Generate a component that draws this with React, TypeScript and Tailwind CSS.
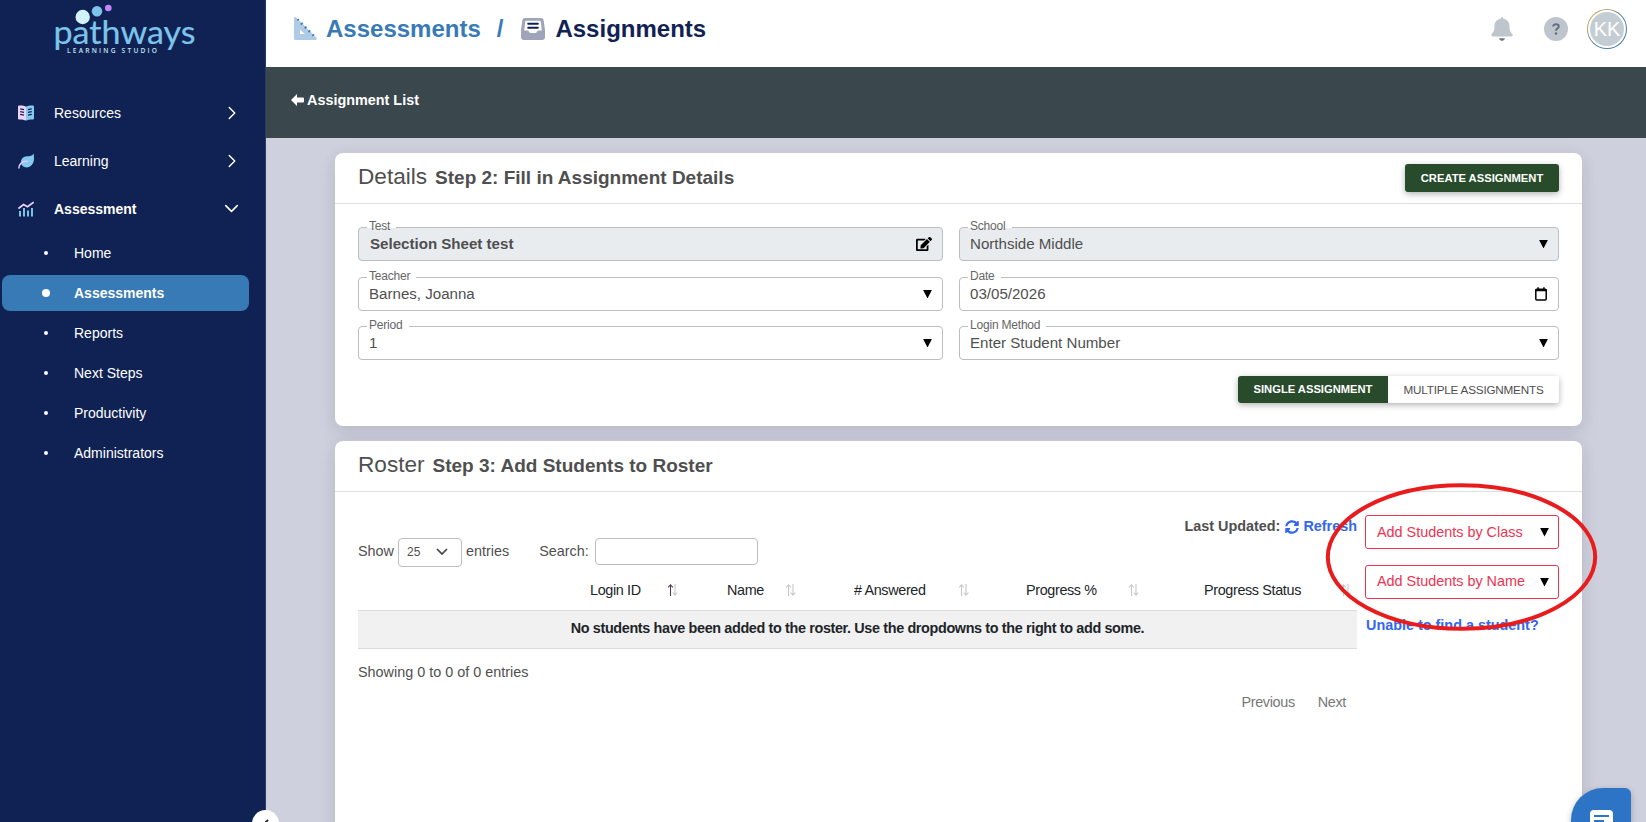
import { type ReactNode } from "react"
import { FaEdit, FaSyncAlt } from "react-icons/fa";
import { ChevronRight, ChevronDown } from "lucide-react";

const BookIcon = () => (
    <svg width="16" height="16" viewBox="0 0 16 16">
        <path d="M8 1.6C6 .5 3.500 .2 1 .5Q0 .6 0 1.500V13.500Q0 14.400 1 14.400C3.500 14.300 6 14.600 8 15.600Z" fill="#ecd3fb" />
        <path d="M8 1.600C10 .5 12.500 .2 15 .5Q16 .6 16 1.500V13.500Q16 14.400 15 14.400C12.500 14.300 10 14.600 8 15.600Z" fill="#84c9ef" />
        <path d="M2.200 3.800L6 4.600M2.200 6.600L6 7.400M2.200 9.400L6 10.200M13.800 3.800L10 4.600M13.800 6.600L10 7.400M13.800 9.400L10 10.200" stroke="#102254" strokeWidth="1.300" />
    </svg>
);

const LeafIcon = () => (
    <svg width="16" height="16" viewBox="0 0 16 16">
        <path d="M15.700 .5C14.500 2.800 12 3.200 9 3.300C5.500 3.400 3 6 3 9C3 12.500 5.500 14.400 8.500 14.400C13 14.400 16 10.500 16 5.500C16 3.500 15.900 1.500 15.700 .5Z" fill="#84c9ef" />
        <path d="M.8 15.500C1 11.500 4 8.200 9.800 8" fill="none" stroke="#ecc9fb" strokeWidth="1.500" />
    </svg>
);

const ChartIcon = () => (
    <svg width="16" height="16" viewBox="0 0 16 16">
        <path d="M.5 7.500L5.500 3.500L9.500 5.800L15.700 1.200" fill="none" stroke="#ecd3fb" strokeWidth="1.700" />
        <path d="M2 10V15.500M6 7V15.500M10 9.500V15.500M14 7V15.500" stroke="#84c9ef" strokeWidth="1.900" />
    </svg>
);

const Caret = () => (
    <svg className="shrink-0" width="9" height="8.5" viewBox="0 0 9 8.5">
        <path d="M.1 0H8.900L4.500 8.500Z" fill="#000" />
    </svg>
);

const CalendarIcon = () => (
    <svg className="mr-px" width="12" height="14" viewBox="0 0 12 14">
        <rect x=".8" y="2.300" width="10.400" height="10.700" rx="1" fill="none" stroke="#000" strokeWidth="1.500" />
        <path d="M.5 2H11.500V4.300H.5ZM2.300 .3H3.800V2H2.300ZM8.200 .3H9.700V2H8.200Z" fill="#000" />
    </svg>
);

const SortIcon = ({ active = false }: { active?: boolean }) => (
    <svg width="11" height="12" viewBox="0 0 11 12" fill="none">
        <path d="M3.500 12V1M1 3.500L3.500 .8L6 3.500" stroke={active ? "#4a3f52" : "#c8c8c8"} strokeWidth="1.100" />
        <path d="M8 0V11M5.700 8.500L8 11.200L10.400 8.500" stroke="#c8c8c8" strokeWidth="1.100" />
    </svg>
);

const Logo = () => (
    <svg className="ml-[50px]" width="156" height="58" viewBox="50 0 156 58">
        <circle cx="82.700" cy="17" r="7.200" fill="#d3f3fb" />
        <circle cx="97" cy="11.300" r="5.200" fill="#7cc4ea" />
        <circle cx="108.300" cy="8" r="3.300" fill="#c287fb" />
        <text x="53.500" y="43.500" fontFamily="Lato, sans-serif" fontSize="32" textLength="142" lengthAdjust="spacingAndGlyphs" fill="#7cc4ea" stroke="#7cc4ea" strokeWidth=".2">pathways</text>
        <text x="67" y="52.800" fontFamily="Open Sans, sans-serif" fontSize="6.600" fontWeight="600" textLength="90" fill="#c3e4f3">LEARNING STUDIO</text>
    </svg>
);

const menu = [
    { name: "Resources", icon: <BookIcon />, open: false },
    { name: "Learning", icon: <LeafIcon />, open: false },
    { name: "Assessment", icon: <ChartIcon />, open: true },
];

const subMenu = ["Home", "Assessments", "Reports", "Next Steps", "Productivity", "Administrators"];

const Sidebar = () => (
    <aside className="relative w-[266px] shrink-0 bg-[#102254] border-r border-[#2b3b68] text-white text-sm">
        <Logo />
        <nav className="pt-[31px]">
            {menu.map(item => (
                <div key={item.name} className="h-12 flex items-center pl-[18px] pr-[22px]">
                    {item.icon}
                    <span className={item.open ? "ml-5 flex-1 font-bold" : "ml-5 flex-1"}>{item.name}</span>
                    {item.open
                        ? <ChevronDown className="mb-px" size={23} strokeWidth={1.6} />
                        : <ChevronRight className="mb-px" size={22} strokeWidth={1.6} />}
                </div>
            ))}
            <ul className="pt-0.5 flex flex-col gap-1">
                {subMenu.map(name => {
                    const active = name === "Assessments";
                    return (
                        <li
                            key={name}
                            className={active
                                ? "ml-0.5 mr-4 h-9 flex items-center rounded-lg bg-[#387ab5] pl-10 font-bold"
                                : "mx-0.5 h-9 flex items-center pl-10"}
                        >
                            <span className="w-2 flex justify-center">
                                <span className={active ? "size-2 rounded-full bg-white" : "size-1 rounded-full bg-white"} />
                            </span>
                            <span className="ml-6">{name}</span>
                        </li>
                    );
                })}
            </ul>
        </nav>
        <button className="absolute left-[252px] top-[810px] z-10 size-[27px] rounded-full bg-white flex items-center justify-center">
            <svg width="6" height="10" viewBox="0 0 6 10"><path d="M5 1L1 5L5 9" fill="none" stroke="#222" strokeWidth="1.800" /></svg>
        </button>
    </aside>
);

const Header = () => (
    <header className="h-[67px] shrink-0 bg-white flex items-start justify-between pl-7 pr-[19px]">
        <div className="mt-[11px] h-[36px] flex items-center text-2xl font-bold">
            <svg className="mb-0.5" width="23" height="23" viewBox="0 0 23 23">
                <path d="M0 1.500C0 0 1.500 -.3 2.500 .7L22.300 20.500C23.300 21.500 22.800 23 21.300 23H1.500Q0 23 0 21.500ZM6 12.500V17H10.800Z" fill="#b0cbe5" fillRule="evenodd" />
                <path d="M4.800 2L3.300 3.500M8.600 5.800L6.800 7.600M12.400 9.600L10.600 11.400M16.200 13.400L14.400 15.200M20 17.200L18.200 19" stroke="#387ab5" strokeWidth="1.600" />
            </svg>
            <span className="ml-[9px] text-[#387ab5]">Assessments</span>
            <span className="ml-4 text-[#387ab5]">/</span>
            <svg className="ml-[18px]" width="24" height="22" viewBox="0 0 24 22">
                <path d="M4 0H20Q22.200 0 22.600 2L24 12V19Q24 22 21 22H3Q0 22 0 19V12L1.400 2Q1.800 0 4 0ZM5.300 2.800Q4.300 2.800 4.200 3.800L3.200 12.500H7L9 15H15L17 12.500H20.800L19.800 3.800Q19.700 2.800 18.700 2.800Z" fill="#9fa4ba" fillRule="evenodd" />
                <path d="M7.200 5.700H16.800M7.200 9.700H16.800" stroke="#102254" strokeWidth="2" strokeLinecap="round" />
            </svg>
            <span className="ml-2.5 text-[#102254]">Assignments</span>
        </div>
        <div className="mt-[9px] flex items-center">
            <svg width="22" height="24" viewBox="0 0 22 24">
                <path d="M11 0Q12.300 0 12.300 1.700C16.500 2.300 18.500 5.500 18.500 9C18.500 13.500 19.500 15 21.200 16.800C22.300 18 21.700 19.500 20.200 19.500H1.800C.3 19.500 -.3 18 .8 16.800C2.500 15 3.500 13.500 3.500 9C3.500 5.500 5.500 2.300 9.700 1.700Q9.700 0 11 0Z" fill="#bfc5cc" />
                <path d="M8 21.300H14Q13.500 24 11 24Q8.500 24 8 21.300Z" fill="#6b7785" />
            </svg>
            <span className="ml-[31px] size-6 rounded-full bg-[#bfc5cc] flex items-center justify-center">
                <svg width="8" height="12" viewBox="0 0 8 12">
                    <path d="M1.200 3.500C1.200 .4 6.800 .5 6.800 3.500C6.800 5.300 4 5.200 4 7.800" fill="none" stroke="#62707f" strokeWidth="2" />
                    <circle cx="4" cy="10.500" r="1.300" fill="#62707f" />
                </svg>
            </span>
            <span className="ml-[19px] size-10 rounded-full p-px bg-[linear-gradient(135deg,#f2b544,#4f86a8_60%,#2f6db5)]">
                <span className="size-full rounded-full border-2 border-white bg-[#c5cdd4] flex items-center justify-center text-xl text-white">KK</span>
            </span>
        </div>
    </header>
);

const Card = ({ title, step, action, children }: { title: string; step: string; action?: ReactNode; children: ReactNode }) => (
    <section className="rounded-lg bg-white shadow-[0_2px_15px_rgba(40,45,80,0.07),0_10px_20px_rgba(40,45,60,0.08)]">
        <div className="h-[51px] flex items-center justify-between border-b border-[#dfdfdf] pl-[23px] pr-[23px]">
            <h2 className="pb-0.5 flex items-baseline text-[#4f4f4f]">
                <span className="text-[22.6px]">{title}</span>
                <span className="ml-2 text-[19px] font-bold">{step}</span>
            </h2>
            {action}
        </div>
        {children}
    </section>
);

const Field = ({ label, value, disabled = false, bold = false, icon = <Caret /> }: { label: string; value: string; disabled?: boolean; bold?: boolean; icon?: ReactNode }) => (
    <div className={disabled
        ? "relative h-[34px] rounded border border-[#bdbdbd] bg-[#e9ecef] flex items-center justify-between pl-[10px] pr-[10px]"
        : "relative h-[34px] rounded border border-[#bdbdbd] bg-white flex items-center justify-between pl-[10px] pr-[10px]"}
    >
        <span className="absolute left-2 -top-px h-px bg-white pl-0.5 pr-1.5 text-xs leading-[-1px] tracking-[-0.2px] text-[#666]">
            <span className="block -mt-px leading-[1px]">{label}</span>
        </span>
        <span className={bold ? "pl-px text-[15.1px] font-bold text-[#4f4f4f]" : "text-[15.1px] text-[#4f4f4f]"}>{value}</span>
        {icon}
    </div>
);

const Details = () => (
    <Card
        title="Details"
        step="Step 2: Fill in Assignment Details"
        action={
            <button className="h-7 w-[154px] rounded-[3px] bg-[#284b2b] text-[11.2px] font-bold text-white shadow-[0_2px_6px_rgba(0,0,0,0.3)]">CREATE ASSIGNMENT</button>
        }
    >
        <div className="h-[222px] pt-[23px] pl-[23px] pr-[23px]">
            <div className="grid grid-cols-[585px_600px] gap-x-4">
                <Field label="Test" value="Selection Sheet test" disabled bold icon={<FaEdit size={16} color="#000" />} />
                <Field label="School" value="Northside Middle" disabled />
            </div>
            <div className="mt-4 grid grid-cols-[585px_600px] gap-x-4">
                <Field label="Teacher" value="Barnes, Joanna" />
                <Field label="Date" value="03/05/2026" icon={<CalendarIcon />} />
            </div>
            <div className="mt-[15px] grid grid-cols-[585px_600px] gap-x-4">
                <Field label="Period" value="1" />
                <Field label="Login Method" value="Enter Student Number" />
            </div>
            <div className="mt-4 flex justify-end text-[11.2px]">
                <div className="h-[27px] flex rounded-[3px] shadow-[0_2px_6px_rgba(0,0,0,0.3)]">
                    <button className="w-[150px] rounded-l-[3px] bg-[#284b2b] font-bold text-white">SINGLE ASSIGNMENT</button>
                    <button className="w-[171px] rounded-r-[3px] bg-white text-[11.7px] tracking-[-0.2px] text-[#4f4f4f]">MULTIPLE ASSIGNMENTS</button>
                </div>
            </div>
        </div>
    </Card>
);

const columns = [
    { name: "Login ID", size: "w-[88px]" },
    { name: "Name", size: "w-[69px] ml-[49px]" },
    { name: "# Answered", size: "w-[115px] ml-[58px]" },
    { name: "Progress %", size: "w-[113px] ml-[57px]" },
    { name: "Progress Status", size: "w-[147px] ml-[65px]" },
];

const Roster = () => (
    <Card title="Roster" step="Step 3: Add Students to Roster">
        <div className="h-[400px] pt-[23px] pl-[23px] pr-[23px] flex text-[14.4px] text-[#4f4f4f]">
            <div className="w-[999px]">
                <div className="h-[22px] pt-0.5 flex items-center justify-end font-bold">
                    Last Updated:
                    <FaSyncAlt className="ml-[5px]" size={14} color="#3366ee" />
                    <a className="ml-1 text-[#3366ee]">Refresh</a>
                </div>
                <div className="mt-px h-[29px] flex items-start">
                    <span className="leading-[27px]">Show</span>
                    <div className="ml-1 w-16 h-[29px] rounded border border-[#bdbdbd] flex items-center justify-between pb-0.5 pl-2 pr-[13px] text-xs">
                        25
                        <svg width="12" height="7" viewBox="0 0 12 7"><path d="M1 1L6 6L11 1" fill="none" stroke="#444" strokeWidth="1.700" /></svg>
                    </div>
                    <span className="ml-1 leading-[27px]">entries</span>
                    <span className="ml-[30px] leading-[27px]">Search:</span>
                    <input className="ml-1.5 w-[163px] h-[27px] rounded border border-[#bdbdbd]" type="text" />
                </div>
                <div className="h-[43px] pl-[232px] pt-[4px] flex items-center tracking-[-0.36px] text-[#212529]">
                    {columns.map((col, i) => (
                        <div key={col.name} className={`${col.size} flex items-center justify-between whitespace-nowrap`}>
                            {col.name}
                            <SortIcon active={i === 0} />
                        </div>
                    ))}
                </div>
                <div className="h-[39px] pb-px border-y border-[#dcdcdc] bg-[#f1f1f1] flex items-center justify-center tracking-[-0.36px] font-bold text-[#212529]">
                    No students have been added to the roster. Use the dropdowns to the right to add some.
                </div>
                <p className="mt-[13px] leading-5">Showing 0 to 0 of 0 entries</p>
                <div className="mt-2.5 flex justify-end gap-[23px] pr-[11px] tracking-[-0.34px] leading-5 text-[#777]">
                    <span>Previous</span>
                    <span>Next</span>
                </div>
            </div>
            <div className="relative ml-2 w-[194px]">
                <button className="h-[34px] w-full rounded-[3px] border border-[#ee3350] flex items-center justify-between pt-px pl-[11px] pr-[9px] text-[#ee3350]">
                    Add Students by Class
                    <Caret />
                </button>
                <button className="mt-4 h-[34px] w-full rounded-[3px] border border-[#ee3350] flex items-center justify-between pt-px pl-[11px] pr-[9px] text-[#ee3350]">
                    <span className="pb-px">Add Students by Name</span>
                    <Caret />
                </button>
                <a className="mt-4 block leading-5 pl-px font-bold text-[#3366ee] whitespace-nowrap">Unable to find a student?</a>
                <svg className="absolute -left-10 -top-8" width="273" height="150" viewBox="0 0 273 150">
                    <ellipse cx="136.500" cy="74" rx="133.700" ry="71.800" fill="none" stroke="#e81c1c" strokeWidth="4" />
                </svg>
            </div>
        </div>
    </Card>
);

const App = () => (
    <div className="relative flex h-[822px] w-[1646px] overflow-hidden bg-[#cfd0dd] font-['Liberation_Sans',Arial,sans-serif]">
        <Sidebar />
        <div className="flex-1 flex flex-col">
            <Header />
            <div className="h-[71px] shrink-0 bg-[#3a484e] pl-[25px] pt-[23px] flex items-start text-[14.4px] leading-5 font-bold text-white">
                <svg className="mt-1" width="13" height="12" viewBox="0 0 13 12"><path d="M0 6L6 0V3.500H12Q13 3.500 13 4.500V7.500Q13 8.500 12 8.500H6V12Z" fill="#fff" /></svg>
                <span className="ml-[3px]">Assignment List</span>
            </div>
            <main className="mt-[15px] ml-[69px] w-[1247px] flex flex-col gap-[15px]">
                <Details />
                <Roster />
            </main>
        </div>
        <button className="absolute left-[1571px] top-[788px] size-[60px] rounded-[6px] rounded-tl-[32px] bg-[#2d74c7] shadow-[0_2px_6px_rgba(0,0,0,0.25)]">
            <svg className="absolute left-[19px] top-[22px]" width="23" height="22" viewBox="0 0 23 22">
                <rect width="23" height="22" rx="4" fill="#fff" />
                <path d="M4 6H19M4 11H14" stroke="#2d74c7" strokeWidth="2" />
            </svg>
        </button>
    </div>
);

export default App
